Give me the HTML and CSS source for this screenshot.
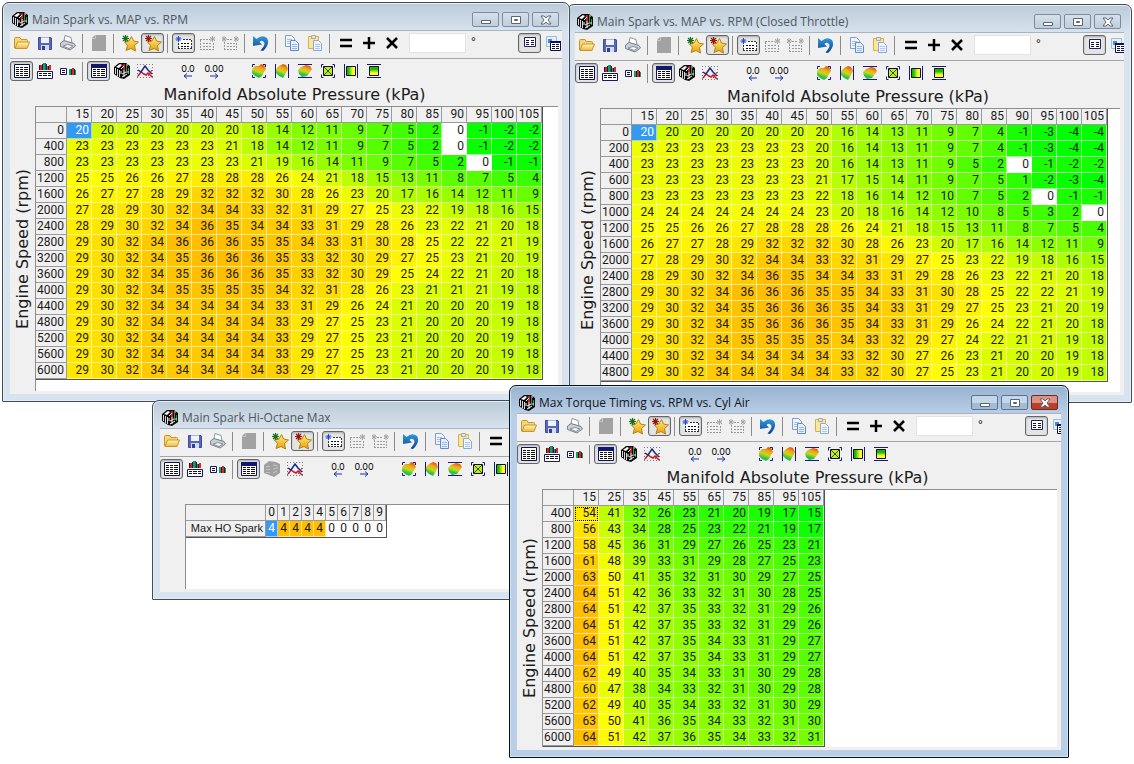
FILE: index.html
```
<!DOCTYPE html>
<html lang="en">
<head>
<meta charset="utf-8">
<title>Spark Tables</title>
<link rel="stylesheet" href="styles.css">
</head>
<body>
<svg class="sprite" aria-hidden="true">
  <defs>
    <linearGradient id="g-folder" x1="0" y1="0" x2="0" y2="1"><stop offset="0" stop-color="#fff6c4"/><stop offset="1" stop-color="#efb83a"/></linearGradient>
    <linearGradient id="g-star" x1="0" y1="0" x2="0" y2="1"><stop offset="0" stop-color="#fff27a"/><stop offset="1" stop-color="#e89c10"/></linearGradient>
    <linearGradient id="g-surf" x1=".7" y1="0" x2=".35" y2="1"><stop offset="0" stop-color="#e04808"/><stop offset=".3" stop-color="#f0a818"/><stop offset=".55" stop-color="#c4d820"/><stop offset=".8" stop-color="#38c038"/><stop offset="1" stop-color="#10b890"/></linearGradient>
    <linearGradient id="g-h" x1="0" y1="0" x2="1" y2="0"><stop offset=".2" stop-color="#10b810"/><stop offset=".7" stop-color="#ffff20"/></linearGradient>
    <linearGradient id="g-v" x1="0" y1="0" x2="0" y2="1"><stop offset=".3" stop-color="#10b810"/><stop offset=".7" stop-color="#ffff20"/></linearGradient>
    <linearGradient id="g-undo" x1="0" y1="0" x2="0" y2="1"><stop offset="0" stop-color="#2e9bdc"/><stop offset="1" stop-color="#123e92"/></linearGradient>

    <symbol id="i-cube" viewBox="0 0 16 16">
      <path d="M0 4 5 0 12 0 16 3V12L10 16 6 15 0 11Z" fill="#0a0a0a"/>
      <path d="M1.500 5v6M3.500 6v7M5.500 7v7" stroke="#d8d8d8"/>
      <path d="M2 4 6 1 8 2 5 5Z" fill="#fff"/><path d="M8.500 1.500 11 1 11 7 9 9Z" fill="#c82020"/>
      <path d="M12.500 3v5M14.500 5v6" stroke="#20a040"/><path d="M7 6l3-3M8 11l4-2M8 14l5-3M10 7v7M7 8v3" stroke="#f4f4f4"/>
      <path d="M12 2h2M12 9h3" stroke="#e8e8e8"/>
    </symbol>
    <symbol id="i-cube-off" viewBox="0 0 16 16">
      <path d="M0 4 5 0 12 1 16 3V12L10 16 0 12Z" fill="#a0a0a0"/>
      <path d="M2 5.500h4M2 8.500h4M2 11.500h4M9 4l5 1M9 8l5-1M9 12l4-2" stroke="#c4c4c4"/>
    </symbol>
    <symbol id="i-open" viewBox="0 0 16 16">
      <path d="M.5 13V3.500Q.5 2.500 1.500 2.500H6L7 4.500H12.500Q13.500 4.500 13.500 5.500V7" fill="#f7d774" stroke="#c9942a"/>
      <path d="M1 13.500 3.500 7H15.500L13 13.500Z" fill="url(#g-folder)" stroke="#c9942a"/>
    </symbol>
    <symbol id="i-save" viewBox="0 0 16 16">
      <path d="M1.500 2.500H14L14.500 3V14.500H1.500Z" fill="#5966b8" stroke="#3f4ca0"/>
      <path d="M4 2H12V8H4Z" fill="#eef3ff"/><path d="M4 2H12V3H4Z" fill="#aab4e4"/>
      <path d="M4 10H12V15H4Z" fill="#d4dcf4"/><path d="M5 11H8V15H5Z" fill="#34408c"/>
    </symbol>
    <symbol id="i-print" viewBox="0 0 16 16">
      <path d="M5 .5 11 2.500 12 8 4 6Z" fill="#fff" stroke="#8a94a4"/>
      <path d="M.5 8 4 5.500 14 8.500 15.500 11 10 15 .5 11.500Z" fill="#c9ced6" stroke="#7a828e"/>
      <path d="M3 11 9 13.500 13 11 8 9.500Z" fill="#f8f8f8" stroke="#8a8f98"/>
    </symbol>
    <symbol id="i-doc" viewBox="0 0 16 16"><path d="M4 0H15V16H1V3Z" fill="#a2a2a2"/><path d="M1 3.500H4.500V0" fill="none" stroke="#c6c6c6"/></symbol>
    <symbol id="i-star-g" viewBox="0 0 18 18">
      <path d="M10.500 2.500 12.500 7 17.500 8 13.500 11.500 14.500 17 10 14.500 5 16.500 6.500 11.500 3.500 8 8 7Z" fill="url(#g-star)" stroke="#b8820f"/>
      <path d="M4.500 1v7M1 4.500h7M2 2l5 5M7 2 2 7" stroke="#107018" stroke-width="1.200"/>
    </symbol>
    <symbol id="i-star-r" viewBox="0 0 18 18">
      <path d="M10.500 2.500 12.500 7 17.500 8 13.500 11.500 14.500 17 10 14.500 5 16.500 6.500 11.500 3.500 8 8 7Z" fill="url(#g-star)" stroke="#b8820f"/>
      <path d="M4.500 1v7M1 4.500h7M2 2l5 5M7 2 2 7" stroke="#9c1408" stroke-width="1.200"/>
    </symbol>
    <symbol id="i-cells" viewBox="0 0 18 16">
      <path d="M6 4H17V14H4V7Z" fill="#fff"/>
      <path d="M8 4.500H17M16.500 5V14M3 13.500H17M3.500 8V13" stroke="#333" stroke-dasharray="2 1" fill="none"/>
      <path d="M6 8.500h2M9 8.500h2M12 8.500h2M6 11.500h2M9 11.500h2M12 11.500h2" stroke="#111"/>
      <path d="M3.500 1v6M.5 4h6M1.500 2l4 4M5.500 2l-4 4" stroke="#2048d0"/>
    </symbol>
    <symbol id="i-cells-a" viewBox="0 0 18 16">
      <path d="M2 4.500H12M2.500 5V15M2 14.500H16M15.500 8V14" stroke="#999" stroke-dasharray="2 1" fill="none"/>
      <path d="M5 8.500h2M8 8.500h2M11 8.500h2M5 11.500h2M8 11.500h2M11 11.500h2" stroke="#999"/>
      <path d="M14.500 1v6M12 4h5M12 2l5 4M17 2l-5 4" stroke="#a4a4a4"/>
    </symbol>
    <symbol id="i-cells-b" viewBox="0 0 18 16">
      <path d="M6 4.500H12M3.500 7V15M3 14.500H16M15.500 8V14" stroke="#999" stroke-dasharray="2 1" fill="none"/>
      <path d="M6 8.500h2M9 8.500h2M12 8.500h2M6 11.500h2M9 11.500h2M12 11.500h2" stroke="#999"/>
      <path d="M15 1v6M13 4h5M13 2l4 4M17 2l-4 4M3 1v6M1 4h5M1 2l4 4M5 2 1 6" stroke="#a4a4a4"/>
    </symbol>
    <symbol id="i-undo" viewBox="0 0 18 16">
      <path d="M1 1 4.500 4Q10 -1 15 3 18.500 9 11 16L8.500 15.500Q14.500 9 11.500 6.500 9.500 5 7.500 7L10 9.500 1 11Z" fill="url(#g-undo)"/>
    </symbol>
    <symbol id="i-copy" viewBox="0 0 16 16">
      <path d="M1.500 .5H7.500L10.500 3.500V11.500H1.500Z" fill="#f0f6ff" stroke="#7c9cd4"/>
      <path d="M3 4.500h5M3 6.500h5M3 8.500h3" stroke="#a8c0e8"/>
      <path d="M6.500 5.500H11.500L14.500 8.500V15.500H6.500Z" fill="#e4eeff" stroke="#6488cc"/>
      <path d="M8 9.500h5M8 11.500h5M8 13.500h5" stroke="#9ab8e8"/>
    </symbol>
    <symbol id="i-paste" viewBox="0 0 16 16">
      <path d="M1.500 1.500H11.500V13.500H1.500Z" fill="#fbe69a" stroke="#d8b048"/>
      <path d="M4.500 .5H8.500V3.500H4.500Z" fill="#e4e4e4" stroke="#a8a8a8"/>
      <path d="M6.500 5.500H11.500L14.500 8.500V15.500H6.500Z" fill="#f0f6ff" stroke="#8aa8dc"/>
      <path d="M8 9.500h5M8 11.500h5M8 13.500h5" stroke="#b0c6ec"/>
    </symbol>
    <symbol id="i-eq" viewBox="0 0 14 14"><path d="M1 4h12M1 10h12" stroke="#000" stroke-width="2.500"/></symbol>
    <symbol id="i-plus" viewBox="0 0 14 14"><path d="M7 1v12M1 7h12" stroke="#000" stroke-width="2.500"/></symbol>
    <symbol id="i-times" viewBox="0 0 14 14"><path d="M2 2 12 12M12 2 2 12" stroke="#000" stroke-width="2.500"/></symbol>
    <symbol id="i-list" viewBox="0 0 14 14">
      <path d="M1.500 1.500H12.500V10.500H1.500Z" fill="#fff" stroke="#20205c"/><path d="M3 4.500h3M3 6.500h3M3 8.500h3M8 4.500h3M8 6.500h3M8 8.500h3" stroke="#101040"/>
    </symbol>
    <symbol id="i-listwin" viewBox="0 0 16 16">
      <path d="M1.500 1.500H11.500V11.500H1.500Z" fill="#e4efff" stroke="#9cbce4"/><path d="M3 4H7V8H3Z" fill="#4c88d8"/>
      <path d="M5.500 6.500H15.500V15.500H5.500Z" fill="#fff" stroke="#101040"/><path d="M5 6H16V8H5Z" fill="#101060"/><path d="M7 9.500h3M11 9.500h3M7 11.500h3M11 11.500h3M7 13.500h3M11 13.500h3" stroke="#101040"/>
    </symbol>
    <symbol id="i-sheet" viewBox="0 0 16 14">
      <path d="M.5 .5H15.500V13.500H.5Z" fill="#fff" stroke="#101050"/><path d="M2 3.500h3M6 3.500h3M10 3.500h4M2 5.500h3M6 5.500h3M10 5.500h4M2 7.500h3M6 7.500h3M10 7.500h4M2 9.500h3M6 9.500h3M10 9.500h4M2 11.500h3M6 11.500h3M10 11.500h4" stroke="#111"/>
    </symbol>
    <symbol id="i-sheetwin" viewBox="0 0 16 14">
      <path d="M.5 .5H15.500V13.500H.5Z" fill="#fff" stroke="#101060"/><path d="M0 0H16V4H0Z" fill="#101870"/><path d="M2 5.500h3M6 5.500h3M10 5.500h4M2 7.500h3M6 7.500h3M10 7.500h4M2 9.500h3M6 9.500h3M10 9.500h4M2 11.500h3M6 11.500h3M10 11.500h4" stroke="#111"/>
    </symbol>
    <symbol id="i-barsheet" viewBox="0 0 16 16">
      <path d="M.5 8.500H15.500V15.500H.5Z" fill="#fff" stroke="#181860"/><path d="M2 10.500h3M6 10.500h4M11 10.500h3M2 12.500h3M6 12.500h4M11 12.500h3" stroke="#111"/>
      <path d="M3 7V2h2v5Z" fill="#d02030"/><path d="M6 7V0h2v7Z" fill="#18a050"/><path d="M8 7V0h1v7Z" fill="#3050c0"/><path d="M10 7V3h1v4Z" fill="#18a050"/><path d="M12 7V2h2v5Z" fill="#e02838"/>
      <path d="M2.500 2v5M5.500 1v6M9.500 1v6M11.500 3v4" stroke="#222"/>
    </symbol>
    <symbol id="i-barsmall" viewBox="0 0 18 10">
      <path d="M1.500 2.500H7.500V8.500H1.500Z" fill="#fff" stroke="#181860"/><path d="M3 4.500h3M3 6.500h3" stroke="#111"/>
      <path d="M10 9V3h2v6Z" fill="#18a050"/><path d="M13 9V2h2v7Z" fill="#d02838"/><path d="M16 9V4h1v5Z" fill="#18a050"/><path d="M12.500 3v6M15.500 3v6" stroke="#222"/>
    </symbol>
    <symbol id="i-chart" viewBox="0 0 18 16">
      <path d="M1 1.500H17M1.500 1V16M16.500 1V16M1 14.500H17" stroke="#777" stroke-dasharray="1 2" fill="none"/>
      <path d="M2 13 5 9 8 11 10 12 12 10 16 14" fill="none" stroke="#c81828" stroke-width="1.500"/>
      <path d="M2 7 5 9 9 3 12 7 16 11" fill="none" stroke="#182880" stroke-width="1.500"/>
      <path d="M12 13 16 7" fill="none" stroke="#c81828"/>
    </symbol>
    <symbol id="i-left" viewBox="0 0 10 6"><path d="M1 3h8M4 .5 1 3 4 5.500" fill="none" stroke="#1830b0"/></symbol>
    <symbol id="i-right" viewBox="0 0 10 6"><path d="M1 3h8M6 .5 9 3 6 5.500" fill="none" stroke="#1830b0"/></symbol>
    <symbol id="i-surf" viewBox="0 0 16 16">
      <path d="M1 6 4 3 8 3 10 1 13 2 15 6 13 9 11 13 8 15 4 13 1 10Z" fill="url(#g-surf)"/>
      <path d="M1.500 4V1.500H4M12 1.500H14.500V4M14.500 12V14.500H12M4 14.500H1.500V12" fill="none" stroke="#181880"/>
    </symbol>
    <symbol id="i-surf-h" viewBox="0 0 16 16">
      <path d="M2 6 5 3 9 1 12 2 14 6 12 10 9 15 5 13 2 10Z" fill="url(#g-surf)"/><path d="M1.500 1v14M14.500 1v14" stroke="#181880"/>
    </symbol>
    <symbol id="i-surf-v" viewBox="0 0 16 16">
      <path d="M1 7 4 4 9 2 13 3 15 6 13 9 10 13 5 14 2 11Z" fill="url(#g-surf)"/><path d="M1 1.500h14M1 14.500h14" stroke="#181880"/>
    </symbol>
    <symbol id="i-box" viewBox="0 0 16 16">
      <path d="M3.500 1.500H1.500V14.500H3.500M12.500 1.500H14.500V14.500H12.500" fill="none" stroke="#181880" stroke-dasharray="5 7 5 0"/>
      <path d="M3.500 3.500H12.500V12.500H3.500Z" fill="#c8e820" stroke="#111"/><path d="M4 4 12 12M12 4 4 12" stroke="#145a14"/>
    </symbol>
    <symbol id="i-box-h" viewBox="0 0 16 16"><path d="M1.500 1v14M14.500 1v14" stroke="#181880"/><path d="M3.500 3.500H12.500V12.500H3.500Z" fill="url(#g-h)" stroke="#111"/></symbol>
    <symbol id="i-box-v" viewBox="0 0 16 16"><path d="M1 1.500h14M1 14.500h14" stroke="#181880"/><path d="M3.500 3.500H12.500V12.500H3.500Z" fill="url(#g-v)" stroke="#111"/></symbol>
    <symbol id="i-min" viewBox="0 0 12 10"><path d="M1.500 5.500H10.500V8.500H1.500Z" fill="#fff" stroke="#5a6676"/></symbol>
    <symbol id="i-max" viewBox="0 0 12 10"><path d="M1.500 1.500H10.500V8.500H1.500Z" fill="#fff" stroke="#5a6676"/><path d="M4.500 4.500H7.500V5.500H4.500Z" fill="none" stroke="#5a6676"/></symbol>
    <symbol id="i-close" viewBox="0 0 12 10"><path d="M1 1H4L6 3 8 1H11L8 5 11 9H8L6 7 4 9H1L4 5Z" fill="#fff" stroke="#5a6676"/></symbol>
  </defs>
</svg>

<template id="chrome">
  <header class="titlebar">
    <svg class="app-icon" aria-hidden="true"><use href="#i-cube"/></svg>
    <h1 class="title"></h1>
    <div class="caption">
      <button class="cap" aria-label="Minimize"><svg><use href="#i-min"/></svg></button>
      <button class="cap" aria-label="Maximize"><svg><use href="#i-max"/></svg></button>
      <button class="cap close" aria-label="Close"><svg><use href="#i-close"/></svg></button>
    </div>
  </header>
  <div class="client">
    <div class="toolbar main">
      <button class="tool" aria-label="Open"><svg><use href="#i-open"/></svg></button>
      <button class="tool" aria-label="Save"><svg><use href="#i-save"/></svg></button>
      <button class="tool" aria-label="Print"><svg><use href="#i-print"/></svg></button>
      <span class="sep"></span>
      <button class="tool" aria-label="Notes" disabled><svg><use href="#i-doc"/></svg></button>
      <span class="sep"></span>
      <button class="tool" aria-label="Add favorite"><svg class="star"><use href="#i-star-g"/></svg></button>
      <button class="tool pressed" aria-label="Favorite" aria-pressed="true"><svg class="star"><use href="#i-star-r"/></svg></button>
      <span class="sep"></span>
      <button class="tool pressed" aria-label="Source table" aria-pressed="true"><svg class="wide"><use href="#i-cells"/></svg></button>
      <button class="tool" aria-label="Compare table" disabled><svg class="wide"><use href="#i-cells-a"/></svg></button>
      <button class="tool" aria-label="Difference table" disabled><svg class="wide"><use href="#i-cells-b"/></svg></button>
      <span class="sep"></span>
      <button class="tool" aria-label="Undo"><svg class="wide"><use href="#i-undo"/></svg></button>
      <span class="sep"></span>
      <button class="tool" aria-label="Copy"><svg><use href="#i-copy"/></svg></button>
      <button class="tool" aria-label="Paste"><svg><use href="#i-paste"/></svg></button>
      <span class="sep"></span>
      <button class="tool" aria-label="Set equal"><svg class="op"><use href="#i-eq"/></svg></button>
      <button class="tool" aria-label="Add"><svg class="op"><use href="#i-plus"/></svg></button>
      <button class="tool" aria-label="Multiply"><svg class="op"><use href="#i-times"/></svg></button>
      <label class="amount"><input type="text" aria-label="Value in degrees"><span>°</span></label>
      <button class="tool pressed" aria-label="Table panel" aria-pressed="true"><svg class="op"><use href="#i-list"/></svg></button>
      <button class="tool" aria-label="Table window"><svg><use href="#i-listwin"/></svg></button>
    </div>
    <div class="toolbar view">
      <button class="tool pressed" aria-label="Table view" aria-pressed="true"><svg class="low"><use href="#i-sheet"/></svg></button>
      <button class="tool" aria-label="Chart above table"><svg><use href="#i-barsheet"/></svg></button>
      <button class="tool" aria-label="Chart beside table"><svg class="flat"><use href="#i-barsmall"/></svg></button>
      <span class="sep"></span>
      <button class="tool pressed" aria-label="Grid" aria-pressed="true"><svg class="low"><use href="#i-sheetwin"/></svg></button>
      <button class="tool surface" aria-label="3D surface"><svg><use href="#i-cube"/></svg></button>
      <button class="tool" aria-label="2D chart"><svg class="wide"><use href="#i-chart"/></svg></button>
      <div class="group decimals">
        <button class="tool decimal">0.0<svg><use href="#i-left"/></svg></button>
        <button class="tool decimal">0.00<svg><use href="#i-right"/></svg></button>
      </div>
      <div class="group">
        <button class="tool" aria-label="Color by surface"><svg><use href="#i-surf"/></svg></button>
        <button class="tool" aria-label="Color surface columns"><svg><use href="#i-surf-h"/></svg></button>
        <button class="tool" aria-label="Color surface rows"><svg><use href="#i-surf-v"/></svg></button>
        <button class="tool" aria-label="Smooth area"><svg><use href="#i-box"/></svg></button>
        <button class="tool" aria-label="Smooth columns"><svg><use href="#i-box-h"/></svg></button>
        <button class="tool" aria-label="Smooth rows"><svg><use href="#i-box-v"/></svg></button>
      </div>
    </div>
    <div class="content">
      <div class="x-axis"></div>
      <div class="y-axis"><span></span></div>
      <div class="grid-area"><table class="grid"><thead></thead><tbody></tbody></table></div>
    </div>
  </div>
</template>

<main class="desktop">
  <section class="window w-closed" data-table="closed"></section>
  <section class="window w-main" data-table="main"></section>
  <section class="window w-octane" data-table="octane"></section>
  <section class="window w-torque active" data-table="torque"></section>
</main>
<script src="app.js"></script>
</body>
</html>
```

FILE: styles.css
```
* { box-sizing: border-box; }

body {
  margin: 0;
  background: #fff;
  color: #000;
  font-family: "Open Sans", "Noto Sans", sans-serif;
  font-size: 12px;
}

.sprite { position: absolute; width: 0; height: 0; }

.desktop {
  position: relative;
  min-height: 100vh;
  overflow: hidden;
}

/* Windows float freely on the desktop */
.window {
  position: absolute;
  display: flex;
  flex-direction: column;
  padding: 0 7px 7px;
  border: 1px solid #414c56;
  border-radius: 7px 7px 1px 1px;
  background: linear-gradient(#bccbd8, #d7e3ee 28px);
  box-shadow: inset 0 0 0 1px #e6eef5;
}
.window.active {
  border-color: #0c1218;
  background: linear-gradient(#98b2cf, #bacfe7 28px);
  box-shadow: inset 0 0 0 1px #c4e6f6;
}
.w-main { left: 2px; top: 2px; width: 568px; height: 400px; }
.w-closed { left: 567px; top: 4px; width: 565px; height: 399px; }
.w-octane { left: 152px; top: 400px; width: 560px; height: 200px; }
.w-torque { left: 509px; top: 385px; width: 560px; height: 373px; }

.titlebar {
  display: flex;
  align-items: center;
  flex: none;
  height: 27px;
  padding: 6px 3px 0 2px;
}
.app-icon { width: 16px; height: 16px; }
.title {
  flex: 1;
  margin: 0 0 0 4px;
  color: #4c5661;
  font-size: 12px;
  font-weight: 400;
  line-height: 16px;
  white-space: nowrap;
}
.active .title { color: #10161c; }

.caption { display: flex; gap: 3px; }
.cap {
  display: flex;
  align-items: center;
  justify-content: center;
  width: 27px;
  height: 15px;
  padding: 0;
  border: 1px solid #7d8c9e;
  border-radius: 2px;
  background: linear-gradient(#d5e0ea, #c0cedb);
}
.cap svg { width: 12px; height: 10px; }
.active .cap { background: linear-gradient(#c5d6e8 50%, #a3bcd6 50%); border-color: #5c7390; }
.active .close { background: linear-gradient(#dc9184 50%, #bf3c26 50%); border-color: #6a2a28; }

.client {
  flex: 1;
  display: flex;
  flex-direction: column;
  min-height: 0;
  overflow: hidden;
  background: #f0f0f0;
}

.toolbar { display: flex; align-items: center; flex: none; }
.toolbar.main {
  height: 29px;
  border-top: 1px solid #a9b4be;
  border-bottom: 1px solid #a6a6a6;
  padding-bottom: 3px;
}
.toolbar.view { height: 26px; padding-bottom: 2px; }

.tool {
  flex: none;
  display: flex;
  align-items: center;
  justify-content: center;
  width: 23px;
  height: 20px;
  padding: 0;
  border: 1px solid transparent;
  border-radius: 3px;
  background: none;
}
.tool.pressed {
  border-color: #666;
  background: #e3e4e6;
  box-shadow: inset 0 1px 2px #aaa;
}
.tool svg { flex: none; width: 16px; height: 16px; }
.tool svg.wide { width: 18px; }
.tool svg.star { width: 18px; height: 18px; }
.tool svg.op { width: 14px; height: 14px; }
.tool svg.low { height: 14px; }
.tool svg.flat { width: 18px; height: 10px; }

.sep {
  flex: none;
  width: 1px;
  height: 19px;
  margin: 0 4px 0 3px;
  background: #8c8c8c;
}

.amount {
  flex: none;
  display: flex;
  gap: 5px;
  width: 109px;
  margin-left: 6px;
  font-family: "Liberation Sans", Arial, sans-serif;
  font-size: 12px;
  line-height: 18px;
}
.amount input {
  width: 57px;
  height: 20px;
  padding: 0 3px;
  border: 1px solid #e3e3e3;
  background: #fff;
}

.group { display: flex; flex: none; margin-left: 21px; }
.decimals { margin-left: 20px; gap: 2px; }
.decimal {
  flex-direction: column;
  width: 24px;
  font: 9px/9px Inter, "Liberation Sans", sans-serif;
  color: #000;
}
.decimal svg { width: 10px; height: 6px; }

.content {
  flex: 1;
  display: grid;
  grid-template-columns: 25px 1fr;
  grid-template-rows: 21px 1fr;
  min-height: 0;
  padding: 0 4px 3px 0;
}
.x-axis, .y-axis {
  font-family: "DejaVu Sans", Verdana, sans-serif;
  font-size: 16px;
  line-height: 20px;
  white-space: nowrap;
  color: #1c1c1c;
}
.x-axis { grid-column: 2; padding-right: 4px; text-align: center; }
.y-axis {
  grid-row: 2;
  display: flex;
  align-items: center;
  justify-content: center;
}
.y-axis span { writing-mode: vertical-rl; transform: rotate(180deg); }

.grid-area {
  min-height: 0;
  overflow: hidden;
  border-top: 1px solid #8e8e8e;
  border-left: 1px solid #8e8e8e;
  background: #fff;
}
.grid {
  border-collapse: separate;
  border-spacing: 0;
  border-right: 1px solid #555;
  border-bottom: 1px solid #555;
  font: 12px/15px "Liberation Sans Narrow", "Arial Narrow", Roboto, sans-serif;
  color: #1a1a1a;
}
.grid th,
.grid td {
  height: 16px;
  padding: 0 2px 0 0;
  text-align: right;
  font-weight: 400;
  white-space: nowrap;
}
.grid th {
  min-width: 25px;
  border-right: 1px solid #9a9a9a;
  border-bottom: 1px solid #9a9a9a;
  background: #f0f0f0;
}
.grid tr > :first-child { min-width: 31px; }
.grid td {
  border-right: 1px solid #ffffff90;
  border-bottom: 1px solid #ffffff90;
}
.grid td.selected { background: #3399f3; color: #fff; }
.grid td.focused { outline: 1px dotted #000; outline-offset: -2px; }

.w-octane .grid th,
.w-octane .grid td { min-width: 12px; }
.w-octane .grid tr > :first-child {
  width: 80px;
  font-family: "Liberation Sans", Arial, sans-serif;
  font-size: 11px;
}
```

FILE: app.js
```
const MAP = [15, 20, 25, 30, 35, 40, 45, 50, 55, 60, 65, 70, 75, 80, 85, 90, 95, 100, 105];

const TABLES = {
  main: {
    title: "Main Spark vs. MAP vs. RPM",
    x: "Manifold Absolute Pressure (kPa)",
    y: "Engine Speed (rpm)",
    columns: MAP,
    scale: [-2, 25, 36],
    rows: `0: 20 20 20 20 20 20 20 18 14 12 11 9 7 5 2 0 -1 -2 -2
400: 23 23 23 23 23 23 21 18 14 12 11 9 7 5 2 0 -1 -2 -2
800: 23 23 23 23 23 23 23 21 19 16 14 11 9 7 5 2 0 -1 -1
1200: 25 25 26 26 27 28 28 28 26 24 21 18 15 13 11 8 7 5 4
1600: 26 27 27 28 29 32 32 32 30 28 26 23 20 17 16 14 12 11 9
2000: 27 28 29 30 32 34 34 33 32 31 29 27 25 23 22 19 18 16 15
2400: 28 29 30 32 34 36 35 34 34 33 31 29 28 26 23 22 21 20 18
2800: 29 30 32 34 36 36 36 35 35 34 33 31 30 28 25 22 22 21 19
3200: 29 30 32 34 35 36 36 36 35 33 32 30 29 27 25 23 21 20 19
3600: 29 30 32 34 35 36 36 36 35 33 32 30 29 25 24 22 21 20 18
4000: 29 30 32 34 35 35 35 35 34 32 31 28 26 23 21 21 21 19 18
4400: 29 30 32 34 34 34 34 34 33 31 29 26 24 21 20 20 20 19 18
4800: 29 30 32 34 34 34 34 34 33 29 27 25 23 21 20 20 20 19 18
5200: 29 30 32 34 34 34 34 34 33 29 27 25 23 21 20 20 20 19 18
5600: 29 30 32 34 34 34 34 34 33 29 27 25 23 21 20 20 20 19 18
6000: 29 30 32 34 34 34 34 34 33 29 27 25 23 21 20 20 20 19 18`,
    mark: "selected"
  },
  closed: {
    title: "Main Spark vs. MAP vs. RPM (Closed Throttle)",
    x: "Manifold Absolute Pressure (kPa)",
    y: "Engine Speed (rpm)",
    columns: MAP,
    scale: [-4, 25, 36],
    rows: `0: 20 20 20 20 20 20 20 20 16 14 13 11 9 7 4 -1 -3 -4 -4
200: 23 23 23 23 23 23 23 20 16 14 13 11 9 7 4 -1 -3 -4 -4
400: 23 23 23 23 23 23 23 20 16 14 13 11 9 5 2 0 -1 -2 -2
600: 23 23 23 23 23 23 23 21 17 15 14 11 9 7 5 1 -2 -3 -4
800: 23 23 23 23 23 23 23 22 18 16 14 12 10 7 5 2 0 -1 -1
1000: 24 24 24 24 24 24 24 23 20 18 16 14 12 10 8 5 3 2 0
1200: 25 25 26 26 27 28 28 28 26 24 21 18 15 13 11 8 7 5 4
1600: 26 27 27 28 29 32 32 32 30 28 26 23 20 17 16 14 12 11 9
2000: 27 28 29 30 32 34 34 33 32 31 29 27 25 23 22 19 18 16 15
2400: 28 29 30 32 34 36 35 34 34 33 31 29 28 26 23 22 21 20 18
2800: 29 30 32 34 36 36 36 35 35 34 33 31 30 28 25 22 22 21 19
3200: 29 30 32 34 35 36 36 36 35 34 33 31 29 27 25 23 21 20 19
3600: 29 30 32 34 35 36 36 36 35 34 33 31 29 26 24 22 21 20 18
4000: 29 30 32 34 35 35 35 35 34 33 32 29 27 24 22 21 21 19 18
4400: 29 30 32 34 34 34 34 34 33 32 30 27 26 23 21 20 20 19 18
4800: 29 30 32 34 34 34 34 34 33 32 30 27 25 23 21 20 20 19 18`,
    mark: "selected"
  },
  octane: {
    title: "Main Spark Hi-Octane Max",
    x: "",
    y: "",
    columns: [0, 1, 2, 3, 4, 5, 6, 7, 8, 9],
    scale: [0, 2, 4],
    rows: `Max HO Spark: 4 4 4 4 4 0 0 0 0 0`,
    mark: "selected",
    surface: false
  },
  torque: {
    title: "Max Torque Timing vs. RPM vs. Cyl Air",
    x: "Manifold Absolute Pressure (kPa)",
    y: "Engine Speed (rpm)",
    columns: [15, 25, 35, 45, 55, 65, 75, 85, 95, 105],
    scale: [15, 50, 64],
    rows: `400: 54 41 32 26 23 21 20 19 17 15
800: 56 43 34 28 25 23 22 21 19 17
1200: 58 45 36 31 29 27 26 25 23 21
1600: 61 48 39 33 31 29 28 27 25 23
2000: 63 50 41 35 32 31 30 29 27 25
2400: 64 51 42 36 33 32 31 30 28 25
2800: 64 51 42 37 35 33 32 31 29 26
3200: 64 51 42 37 35 33 32 31 29 26
3600: 64 51 42 37 35 34 33 31 29 27
4000: 64 51 42 37 35 34 33 31 29 27
4400: 62 49 40 35 34 33 31 30 29 28
4800: 60 47 38 34 33 32 31 30 29 28
5200: 62 49 40 35 34 33 32 31 30 29
5600: 63 50 41 36 35 34 33 32 31 30
6000: 64 51 42 37 36 35 34 33 32 31`,
    mark: "focused"
  }
};

// Green at the low end, yellow in the middle, orange at the top; zero stays white.
function heat(value, [low, mid, high]) {
  if (value === 0) return "#fff";
  if (value <= mid) return `rgb(${Math.round(255 * (value - low) / (mid - low))}, 255, 0)`;
  return `rgb(255, ${Math.round(255 - 65 * (value - mid) / (high - mid))}, 0)`;
}

function headerCell(text, scope) {
  const th = document.createElement("th");
  th.scope = scope;
  th.textContent = text;
  return th;
}

for (const win of document.querySelectorAll(".window")) {
  const table = TABLES[win.dataset.table];
  win.append(document.getElementById("chrome").content.cloneNode(true));
  win.querySelector(".title").textContent = table.title;
  win.querySelector(".x-axis").textContent = table.x;
  win.querySelector(".y-axis span").textContent = table.y;
  if (table.surface === false) {
    win.querySelector(".surface").disabled = true;
    win.querySelector(".surface use").setAttribute("href", "#i-cube-off");
  }

  const head = win.querySelector("thead").insertRow();
  head.append(headerCell("", "col"), ...table.columns.map(c => headerCell(c, "col")));

  const body = win.querySelector("tbody");
  for (const line of table.rows.split("\n")) {
    const [name, values] = line.split(": ");
    const row = body.insertRow();
    row.append(headerCell(name, "row"));
    for (const value of values.split(" ").map(Number)) {
      const cell = row.insertCell();
      cell.textContent = value;
      cell.style.backgroundColor = heat(value, table.scale);
    }
  }
  const first = body.querySelector("td");
  first.classList.add(table.mark);
  if (table.mark === "selected") first.style.backgroundColor = "";
}
```
